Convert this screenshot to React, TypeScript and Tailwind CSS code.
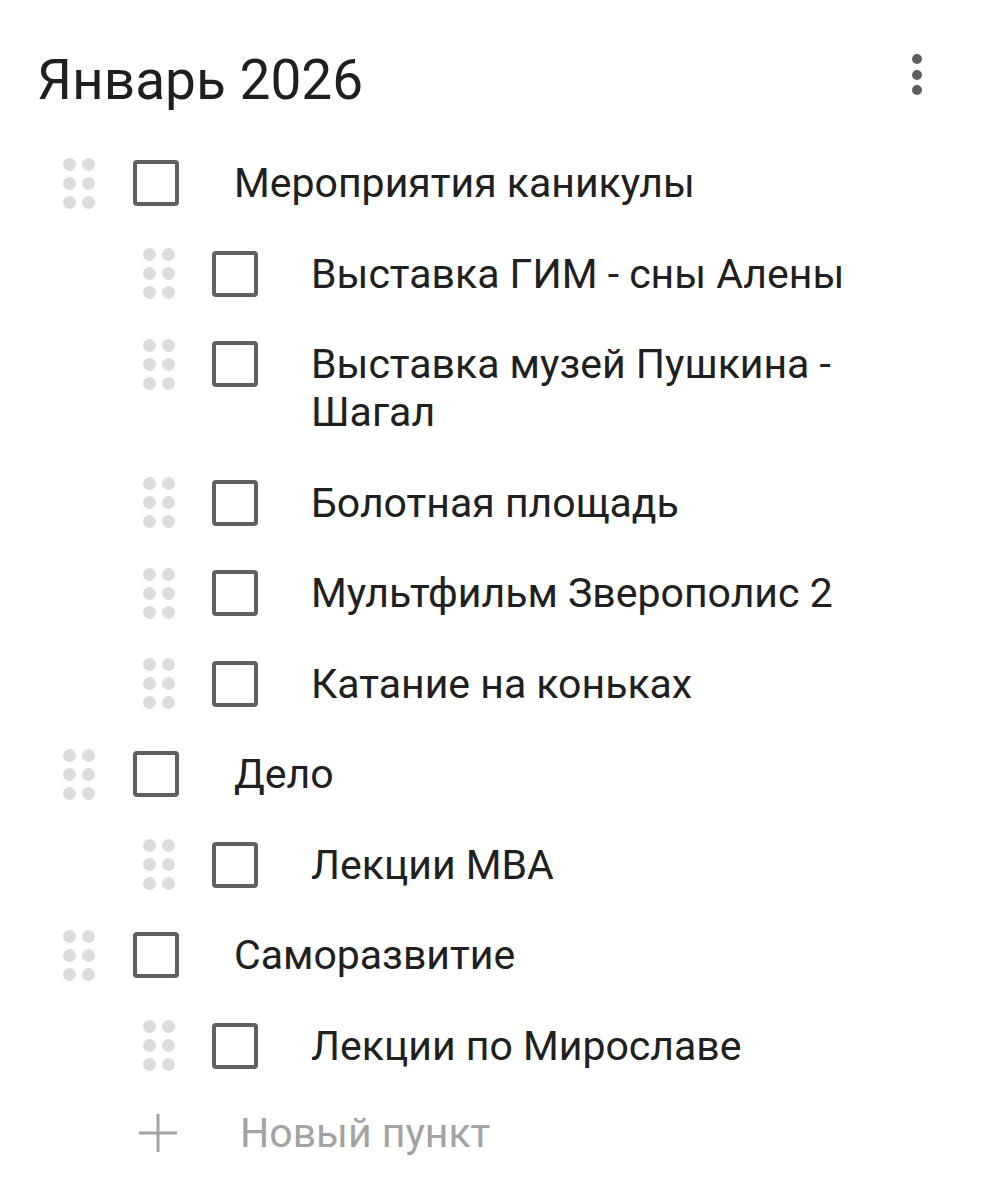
import React from "react";

type Item = { text: string; level: 0 | 1 };

const items: Item[] = [
  { text: "Мероприятия каникулы", level: 0 },
  { text: "Выставка ГИМ - сны Алены", level: 1 },
  { text: "Выставка музей Пушкина - Шагал", level: 1 },
  { text: "Болотная площадь", level: 1 },
  { text: "Мультфильм Зверополис 2", level: 1 },
  { text: "Катание на коньках", level: 1 },
  { text: "Дело", level: 0 },
  { text: "Лекции MBA", level: 1 },
  { text: "Саморазвитие", level: 0 },
  { text: "Лекции по Мирославе", level: 1 },
];

const Handle = () => (
  <div className="grid grid-cols-2 gap-x-[6px] gap-y-[6px] w-[32px]">
    {[0, 1, 2, 3, 4, 5].map((i) => (
      <span key={i} className="w-[13px] h-[13px] rounded-full bg-[#dcdcdc]" />
    ))}
  </div>
);

const Row = ({ item }: { item: Item }) => (
  <div className={`flex items-start py-[21.25px] ${item.level === 1 ? "pl-[143px]" : "pl-[63px]"}`}>
    <div className="h-[48px] flex items-center">
      <Handle />
    </div>
    <div className={`h-[48px] flex items-center ${item.level === 1 ? "ml-[37px]" : "ml-[38px]"}`}>
      <div className="w-[46px] h-[46px] border-[4px] border-[#606060] rounded-[4px]" />
    </div>
    <div className={`${item.level === 1 ? "ml-[53px]" : "ml-[55px]"} pr-[130px] text-[41px] leading-[48px] text-[#202020] max-w-[700px]`}>
      {item.text}
    </div>
  </div>
);

export default function App() {
  return (
    <div className="w-[1004px] min-h-[1200px] bg-white" style={{ fontFamily: "Roboto, 'Liberation Sans', sans-serif" }}>
      <div className="flex items-start justify-between pt-[48px] pl-[37px] pr-[82px]">
        <h1 className="text-[55px] leading-[64px] text-[#1f1f1f] font-normal">Январь 2026</h1>
        <div className="flex flex-col items-center gap-[5.5px] pt-[6px]">
          <span className="w-[10px] h-[10px] rounded-full bg-[#5f5f5f]" />
          <span className="w-[10px] h-[10px] rounded-full bg-[#5f5f5f]" />
          <span className="w-[10px] h-[10px] rounded-full bg-[#5f5f5f]" />
        </div>
      </div>
      <div className="mt-[26px]">
        {items.map((it, i) => (
          <Row key={i} item={it} />
        ))}
        <div className="flex items-center pl-[138px] pt-[18px] pb-[21px]">
          <div className="h-[48px] flex items-center">
            <svg width="40" height="40" viewBox="0 0 40 40">
              <path d="M20 1v38M1 20h38" stroke="#a3a3a3" strokeWidth="3" />
            </svg>
          </div>
          <div className="ml-[62px] text-[41px] leading-[48px] text-[#a3a3a3]">Новый пункт</div>
        </div>
      </div>
    </div>
  );
}
